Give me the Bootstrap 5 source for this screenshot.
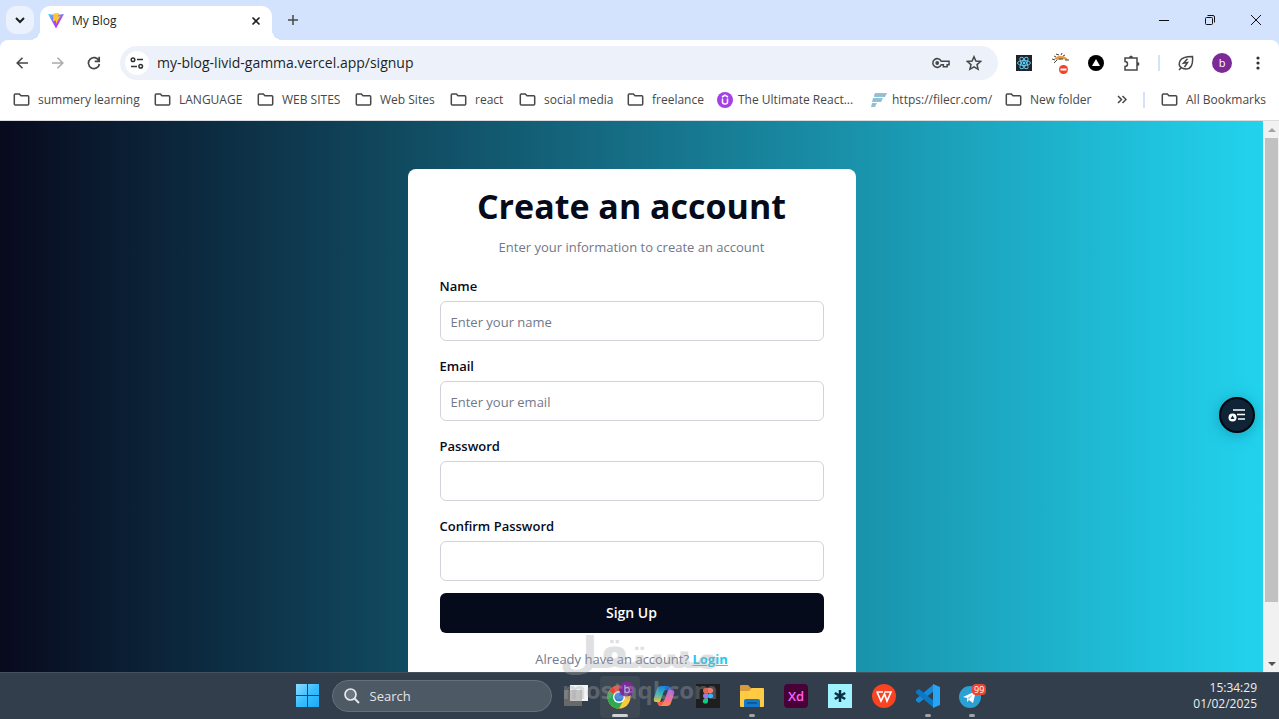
<!DOCTYPE html>
<html lang="en">
<head>
<meta charset="utf-8">
<meta name="viewport" content="width=device-width, initial-scale=1">
<title>My Blog</title>
<link href="https://cdn.jsdelivr.net/npm/bootstrap@5.3.0/dist/css/bootstrap.min.css" rel="stylesheet">
<style>
  body { font-family: "Open Sans", "Noto Sans", sans-serif; font-size: 14px; line-height: 20px; color: #060b1c; background: #d3e3fd; }
  button { font: inherit; color: inherit; }
  svg { display: block; flex: none; }
  .plain { border: 0; background: none; padding: 0; display: flex; align-items: center; justify-content: center; }
  .line { fill: none; stroke: currentColor; }
  /* Tab strip */
  .tabstrip { height: 40px; padding-left: 6px; }
  .tab-search { width: 28px; height: 28px; border-radius: 10px; background: #ebf1fd; margin: 6px 6px 6px 0; color: #1f1f1f; }
  .page-tab { width: 232px; height: 34px; margin-top: 6px; padding: 0 10px 5px 8px; gap: 8px; background: #fff; border-radius: 10px 10px 0 0; font-size: 12px; color: #1f1f1f; position: relative; }
  .page-tab::before, .page-tab::after { content: ""; position: absolute; bottom: 0; width: 10px; height: 10px; }
  .page-tab::before { left: -10px; background: radial-gradient(circle at 0 0, transparent 10px, #fff 10px); }
  .page-tab::after { right: -10px; background: radial-gradient(circle at 100% 0, transparent 10px, #fff 10px); }
  .win { width: 46px; height: 40px; color: #111; }
  /* Address bar */
  .toolbar { height: 46px; background: #fff; border-radius: 8px 8px 0 0; color: #474747; padding: 0 3px 0 4px; }
  .nav-btn { width: 36px; height: 34px; }
  .nav-btn.off { color: #a9abae; }
  .omnibox { height: 34px; border-radius: 17px; background: #edf2fa; margin-left: 8px; padding: 0 16px 0 5px; }
  .site-info { width: 24px; height: 24px; border-radius: 50%; background: #fff; color: #333; }
  .omnibox input { border: 0; background: none; outline: 0; padding: 0; min-width: 0; font-size: 14px; color: #1f1f1f; }
  .ext { width: 36px; height: 34px; }
  .divider { width: 2px; height: 16px; background: #d3e3fd; }
  .avatar { width: 20px; height: 20px; border-radius: 50%; background: #7b2a98; color: #fff; font-size: 11px; line-height: 19px; text-align: center; }
  /* Bookmarks */
  .bookmarks { height: 35px; background: #fff; border-bottom: 1px solid #dadce0; font-size: 12px; padding: 0 13px 7px; color: #474747; }
  .bookmark-list { display: grid; grid-template-columns: 141px 103px 98px 95px 69px 108px 89px 154px 135px auto; }
  .bookmarks a { display: flex; align-items: center; gap: 8px; color: #474747; text-decoration: none; white-space: nowrap; }
  /* Signup page */
  .page-view { min-height: 0; overflow: hidden; }
  .signup { background: linear-gradient(to right, #080a1e, #22d3ee); padding-top: 48px; }
  .signup-card { width: 448px; background: #fff; border-radius: 8px; padding: 15px 32px 32px; }
  .signup-card h1 { font-size: 34px; line-height: 45px; font-weight: 700; margin: 0 0 8px; white-space: nowrap; }
  .muted { color: #71788a; font-size: 13px; }
  .fields { margin: 22px 0 12px; display: grid; gap: 18px; }
  .field label { display: block; font-weight: 600; font-size: 13px; line-height: 14px; margin-bottom: 8px; }
  .field .form-control { height: 40px; border: 1px solid #d1d3da; border-radius: 6px; padding: 2px 10px 0; font-size: 13px; }
  .field .form-control::placeholder { color: #71788a; opacity: 1; }
  .signup-btn { height: 40px; background: #060b1c; color: #fff; border: 0; border-radius: 6px; font-size: 14px; font-weight: 600; padding: 0; }
  .login-link { color: #22c9ee; font-weight: 700; }
  .scroll-rail { width: 16px; background: #f1f1f1; border-left: 1px solid #f8f8f8; color: #505050; }
  .scroll-thumb { width: 13px; margin: 0 1px; flex: 465 0 0; background: #c1c1c1; }
  .scroll-rest { flex: 53 0 0; }
  .arrow { height: 17px; }
  .reader { position: absolute; right: 24px; top: 276px; width: 36px; height: 36px; border-radius: 50%; background: #0f2437; border: 2px solid #02060c; box-shadow: 0 2px 14px #0e7f9a99; color: #fff; }
  /* Taskbar */
  .taskbar { height: 47px; background: #323e4b; border-top: 1px solid #46515c; color: #eee; }
  .side { flex: 1 1 0; }
  .dock { flex: none; height: 46px; }
  .tile { width: 44px; height: 44px; position: relative; }
  .tile.open::after { content: ""; position: absolute; left: 19px; bottom: 1px; width: 6px; height: 3px; border-radius: 2px; background: #a0a4aa; }
  .tile.active::before { content: ""; position: absolute; inset: 2px 2px 0; border-radius: 4px; background: #3e4954; }
  .tile.active::after { left: 14px; width: 16px; background: #d0d3d6; }
  .tile svg { position: relative; }
  .search-pill { width: 220px; height: 32px; border-radius: 16px; background: #4d5965; border: 1px solid #65707a; padding: 0 11px; margin: 0 2px; gap: 10px; }
  .search-pill input { background: none; border: 0; outline: 0; min-width: 0; width: 100%; color: #e3e5e8; padding: 0; font-size: 13px; }
  .search-pill input::placeholder { color: #e3e5e8; opacity: 1; }
  .clock { font-size: 12px; line-height: 16px; padding-right: 22px; }
  .stamp { position: absolute; left: 50%; bottom: 0; width: 160px; height: 104px; margin-left: -80px; overflow: visible; color: #a6a8ad; opacity: .35; pointer-events: none; }
</style>
</head>
<body class="vh-100 d-flex flex-column overflow-hidden position-relative">
<svg width="0" height="0" class="position-absolute"><defs>
  <symbol id="folder" viewBox="0 0 16 13"><path d="M1.8.9h4l1.7 1.8h6.7q1 0 1 1v7.4q0 1-1 1H1.8q-1 0-1-1V1.9q0-1 1-1z" fill="none" stroke="#474747" stroke-width="1.5"/></symbol>
</defs></svg>

<header>
  <div class="tabstrip d-flex">
    <button class="plain tab-search" aria-label="Search tabs"><svg width="10" height="7" viewBox="0 0 10 7"><path class="line" stroke-width="2" d="M1 1l4 4 4-4"/></svg></button>
    <div class="page-tab d-flex align-items-center">
      <svg width="16" height="16" viewBox="0 0 16 16"><defs><linearGradient id="v" x2=".6" y2="1"><stop stop-color="#41d1ff"/><stop offset=".6" stop-color="#a64cf5"/><stop offset="1" stop-color="#bd34fe"/></linearGradient></defs><path d="M0 1l8 1 8-1-8 14.500z" fill="url(#v)"/><path d="M5.500.500L11 0l-1 3.500 2.500-.5L8 11V7.500l-3 .5z" fill="#ffc430"/></svg>
      <span class="flex-grow-1">My Blog</span>
      <button class="plain" aria-label="Close tab"><svg width="12" height="12" viewBox="0 0 12 12"><path class="line" stroke-width="1.6" d="M2.500 2.500l7 7m0-7l-7 7"/></svg></button>
    </div>
    <button class="plain ms-3" aria-label="New tab"><svg width="10" height="10" viewBox="0 0 10 10"><path d="M5 0v10M0 5h10" stroke="#474747" stroke-width="1.5"/></svg></button>
    <div class="d-flex ms-auto">
      <button class="plain win" aria-label="Minimize"><svg width="10" height="10"><path d="M0 5.500h10" stroke="#111"/></svg></button>
      <button class="plain win" aria-label="Restore"><svg width="10" height="10" viewBox="0 0 10 10"><rect x=".5" y="2.500" width="7" height="7" rx="1" fill="none" stroke="#111"/><path d="M2.500.5H8Q9.500.5 9.500 2v5.500" fill="none" stroke="#111"/></svg></button>
      <button class="plain win" aria-label="Close"><svg width="10" height="10" viewBox="0 0 10 10"><path d="M0 0l10 10M10 0L0 10" stroke="#111"/></svg></button>
    </div>
  </div>

  <div class="toolbar d-flex align-items-center">
    <button class="plain nav-btn" aria-label="Back"><svg width="12" height="12" viewBox="0 0 12 12"><path class="line" stroke-width="1.6" d="M6.500.7L1.200 6l5.300 5.300M1.200 6H12"/></svg></button>
    <button class="plain nav-btn off" aria-label="Forward"><svg width="12" height="12" viewBox="0 0 12 12"><path class="line" stroke-width="1.6" d="M5.500.7L10.800 6l-5.300 5.300M10.800 6H0"/></svg></button>
    <button class="plain nav-btn" aria-label="Reload"><svg width="14" height="14" viewBox="0 0 14 14"><path class="line" stroke-width="1.7" d="M12 4.800A5.500 5.500 0 1 0 12.400 8M12.200.8v4.500H7.700"/></svg></button>
    <div class="omnibox d-flex align-items-center flex-grow-1">
      <button class="plain site-info" aria-label="Site information"><svg width="14" height="12" viewBox="0 0 14 12"><g class="line" stroke-width="1.5"><path d="M7 2.500h6M1 9.500h6"/><circle cx="3" cy="2.700" r="1.800"/><circle cx="10.700" cy="9.200" r="1.800"/></g></svg></button>
      <input class="flex-grow-1 ms-2" aria-label="Address" value="my-blog-livid-gamma.vercel.app/signup">
      <button class="plain me-3" aria-label="Passwords"><svg width="18" height="12" viewBox="0 0 19 12"><path class="line" stroke-width="1.6" d="M9.700 4.200A4.600 4.600 0 1 0 9.700 7.800H12V10h4V7.800h2V4.200z"/><circle cx="5.500" cy="6" r="2" fill="#474747"/></svg></button>
      <button class="plain" aria-label="Bookmark this page"><svg width="16" height="16" viewBox="0 0 16 16"><path class="line" stroke-width="1.5" d="M8 1.700l1.900 4.400 4.700.4-3.600 3.100 1.100 4.700L8 11.800l-4.100 2.500L5 9.600 1.400 6.500l4.700-.4z"/></svg></button>
    </div>
    <div class="d-flex align-items-center ps-2">
      <button class="plain ext" aria-label="React Developer Tools"><svg width="16" height="16" viewBox="0 0 16 16"><path fill="#20232a" d="M0 0h16v16H0z"/><g fill="none" stroke="#61c9f0"><ellipse cx="8" cy="8" rx="6.500" ry="2.500"/><ellipse cx="8" cy="8" rx="6.500" ry="2.500" transform="rotate(60 8 8)"/><ellipse cx="8" cy="8" rx="6.500" ry="2.500" transform="rotate(120 8 8)"/></g><circle cx="8" cy="8" r="1.400" fill="#61c9f0"/></svg></button>
      <button class="plain ext" aria-label="Download extension"><svg width="18" height="22" viewBox="0 0 18 22"><path d="M3 7q4-4 7-3 5 0 7 4l-6-1-4 1z" fill="#e59a3b"/><path d="M5 2l3 1m3-2l-1 2m4 0l-2 1M1 7l3 1m-1 3l3-3m2-1h4m2 1h4M3 4l2 1" stroke="#444" fill="none"/><circle cx="12.500" cy="17.500" r="4.500" fill="#f0432a"/><path fill="#fff" d="M9.500 16.500h6v2h-6z"/></svg></button>
      <button class="plain ext" aria-label="Reader extension"><svg width="16" height="16"><circle cx="8" cy="8" r="8"/><path d="M8 4l4 7H4z" fill="#fff"/></svg></button>
      <button class="plain ext" aria-label="Extensions"><svg width="18" height="17" viewBox="0 0 18 17"><path class="line" stroke-width="1.5" d="M2 3h12v12H2v-3.500a2.500 2.500 0 0 0 0-5z"/><path d="M6 3q0-2.500 2-2.500T10 3zM14 7q2.500 0 2.500 2T14 11z" fill="#474747"/></svg></button>
      <span class="divider ms-2 me-2"></span>
      <button class="plain ext" aria-label="Energy saver"><svg width="16" height="16" viewBox="0 0 16 16"><path class="line" stroke-width="1.5" d="M14.500 1.500Q15.500 14 8 14-1 13 2 6 4 1.500 14.500 1.500zM1 15l2.500-2.500M9.500 3.800L5.500 8.200l4-.6-3 4.400"/></svg></button>
      <button class="plain ext" aria-label="Profile"><span class="avatar">b</span></button>
      <button class="plain ext" aria-label="Browser menu"><svg width="4" height="14" fill="#333"><circle cx="2" cy="2" r="1.600"/><circle cx="2" cy="7" r="1.600"/><circle cx="2" cy="12" r="1.600"/></svg></button>
    </div>
  </div>

  <nav class="bookmarks d-flex align-items-center" aria-label="Bookmarks">
    <div class="bookmark-list">
      <a href="#"><svg width="17" height="13"><use href="#folder"/></svg>summery learning</a>
      <a href="#"><svg width="17" height="13"><use href="#folder"/></svg>LANGUAGE</a>
      <a href="#"><svg width="17" height="13"><use href="#folder"/></svg>WEB SITES</a>
      <a href="#"><svg width="17" height="13"><use href="#folder"/></svg>Web Sites</a>
      <a href="#"><svg width="17" height="13"><use href="#folder"/></svg>react</a>
      <a href="#"><svg width="17" height="13"><use href="#folder"/></svg>social media</a>
      <a href="#"><svg width="17" height="13"><use href="#folder"/></svg>freelance</a>
      <a href="#" class="gap-1"><svg width="18" height="16" viewBox="0 0 18 16"><circle cx="9" cy="8" r="8" fill="#a53fe6"/><path d="M6.500 6.500V10q0 2 2.500 2t2.500-2V6.500M6 5l3-1.800L12 5" fill="none" stroke="#fff" stroke-width="1.500"/></svg>The Ultimate React...</a>
      <a href="#" class="gap-1"><svg width="18" height="16" viewBox="0 0 18 16"><path d="M5 1h12l-2 4H4zM3 6h10l-2 4H2zM2 11h5l-2 4H1z" fill="#8cc5dc"/><path d="M4 3h12M3 8h9M2 13h4" stroke="#a9b0b5" stroke-dasharray="3 1"/></svg>https://filecr.com/</a>
      <a href="#"><svg width="17" height="13"><use href="#folder"/></svg>New folder</a>
    </div>
    <div class="d-flex align-items-center ms-auto">
      <button class="plain" aria-label="More bookmarks"><svg width="10" height="9" viewBox="0 0 10 9"><path class="line" stroke-width="1.5" d="M1 1l3.500 3.500L1 8m4.500-7L9 4.500 5.500 8"/></svg></button>
      <span class="divider mx-3"></span>
      <a href="#"><svg width="17" height="13"><use href="#folder"/></svg>All Bookmarks</a>
    </div>
  </nav>
</header>

<div class="page-view d-flex flex-grow-1 position-relative">
  <main class="signup flex-grow-1">
    <form class="signup-card mx-auto">
      <h1 class="text-center">Create an account</h1>
      <p class="muted text-center mb-0">Enter your information to create an account</p>
      <div class="fields">
        <div class="field"><label for="name">Name</label><input id="name" class="form-control" placeholder="Enter your name"></div>
        <div class="field"><label for="email">Email</label><input id="email" type="email" class="form-control" placeholder="Enter your email"></div>
        <div class="field"><label for="pw">Password</label><input id="pw" type="password" class="form-control"></div>
        <div class="field"><label for="pw2">Confirm Password</label><input id="pw2" type="password" class="form-control"></div>
      </div>
      <button type="button" class="signup-btn w-100">Sign Up</button>
      <p class="muted text-center mt-3 mb-0">Already have an account? <a class="login-link" href="#">Login</a></p>
    </form>
  </main>
  <div class="scroll-rail d-flex flex-column">
    <span class="arrow plain"><svg width="8" height="4"><path d="M0 4l4-4 4 4z" fill="#a3a3a3"/></svg></span>
    <span class="scroll-thumb"></span><span class="scroll-rest"></span>
    <span class="arrow plain"><svg width="8" height="4"><path d="M0 0l4 4 4-4z" fill="#505050"/></svg></span>
  </div>
  <button class="plain reader" aria-label="Open reader"><svg width="18" height="14" viewBox="0 0 18 14"><path d="M5 2h12M9 6.500h8M10 11h7" stroke="#fff" stroke-width="1.500"/><circle cx="4.500" cy="9.500" r="4" fill="#fff"/><path d="M4.500 7.500l2 3.500h-4z" fill="#0f2437"/></svg></button>
</div>

<footer class="taskbar d-flex align-items-center">
  <div class="side"></div>
  <div class="dock d-flex align-items-center">
    <button class="plain tile" aria-label="Start"><svg width="24" height="24" viewBox="0 0 24 24"><defs><linearGradient id="w" x2="1" y2="1"><stop stop-color="#8fdcff"/><stop offset=".5" stop-color="#38bfff"/><stop offset="1" stop-color="#1ca9f5"/></linearGradient></defs><path d="M0 0h11v11H0zM12 0h11v11H12zM0 12h11v11H0zM12 12h11v11H12z" fill="url(#w)"/></svg></button>
    <div class="search-pill d-flex align-items-center"><svg width="16" height="16" viewBox="0 0 16 16"><circle cx="6.500" cy="6.500" r="5.500" fill="#6b7681" stroke="#e8e8e8" stroke-width="1.700"/><path d="M10.500 10.500l4.500 4.500" stroke="#e8e8e8" stroke-width="2"/></svg><input aria-label="Search" placeholder="Search"></div>
    <button class="plain tile" aria-label="Task view"><svg width="24" height="24" viewBox="0 0 24 24"><path d="M0 6h18v16H0z" fill="#69696a"/><path d="M6 1h18v16H6z" fill="#f5f5f5"/><path d="M6 6h12v11H6z" fill="#c2c2c2"/></svg></button>
    <button class="plain tile active open" aria-label="Chrome"><svg width="28" height="30" viewBox="0 0 28 30"><g transform="translate(13 16)"><circle r="11.500" fill="#fbc93c"/><path d="M0 0L-10-5.800A11.500 11.500 0 0 1 10-5.800z" fill="#ea4335"/><path d="M0 0l-10-5.800A11.500 11.500 0 0 0 0 11.500l5-9z" fill="#2da94f"/><circle r="6" fill="#fff"/><circle r="4.600" fill="#3482e0"/></g><circle cx="20.500" cy="8" r="7.500" fill="#7b2a98"/><text x="17.500" y="12" fill="#d8c5e0" font-size="11">b</text></svg></button>
    <button class="plain tile" aria-label="Copilot"><svg width="24" height="22" viewBox="0 0 24 22"><defs><linearGradient id="c1" x2="0" y2="1"><stop stop-color="#1a83d9"/><stop offset=".5" stop-color="#32b9b7"/><stop offset="1" stop-color="#efc82d"/></linearGradient><linearGradient id="c2" x2="0" y2="1"><stop stop-color="#a95af0"/><stop offset=".5" stop-color="#ee69a6"/><stop offset="1" stop-color="#ff8a42"/></linearGradient></defs><path d="M17 1H9Q6 1 5 4L2 13q-1 4 2 4h4l4-11q1-2 3-2h2z" fill="url(#c1)"/><path d="M7 21h8q3 0 4-3l3-9q1-4-2-4h-4l-4 11q-1 2-3 2H7z" fill="url(#c2)"/><path d="M14 1h2q2 0 3 4h-4q-2 0-3 3z" fill="#246fd2"/><path d="M5 17h4q2 0 3-4-1 8-4 8-2 0-3-4z" fill="#f15d45"/></svg></button>
    <button class="plain tile" aria-label="Figma"><svg width="24" height="24" viewBox="0 0 24 24"><path fill="#1e1e1e" d="M0 0h24v24H0z"/><path d="M12 4H9.500a2.600 2.600 0 0 0 0 5.200H12z" fill="#f24e1e"/><path d="M12 4h2.500a2.600 2.600 0 0 1 0 5.200H12z" fill="#ff7262"/><path d="M12 9.200H9.500a2.600 2.600 0 0 0 0 5.200H12z" fill="#a259ff"/><circle cx="14.500" cy="11.800" r="2.600" fill="#30b6ff"/><path d="M12 14.400H9.500A2.600 2.600 0 1 0 12 17z" fill="#0acf83"/></svg></button>
    <button class="plain tile open" aria-label="File Explorer"><svg width="24" height="22" viewBox="0 0 24 22"><path d="M0 1q0-1 1-1h7l3 3h12v6H0z" fill="#d99a3a"/><path d="M0 6h9l3-3h11q1 0 1 1v17q0 1-1 1H1q-1 0-1-1z" fill="#ffca44"/><path d="M4 22v-6q0-2 2-2h12q2 0 2 2v6z" fill="#1477c8"/><path d="M7 18h10" stroke="#083f73"/></svg></button>
    <button class="plain tile" aria-label="Adobe XD"><svg width="24" height="24"><rect width="24" height="24" rx="4" fill="#470137"/><text x="4" y="17" font-size="13" font-weight="600" fill="#ff61f6">Xd</text></svg></button>
    <button class="plain tile" aria-label="Notes"><svg width="24" height="24"><path fill="#9ff3ff" d="M0 0h24v24H0z"/><path d="M12 6v12M6.800 9l10.400 6M17.200 9L6.800 15" stroke="#092f45" stroke-width="2.500"/></svg></button>
    <button class="plain tile" aria-label="WPS Office"><svg width="24" height="24"><circle cx="12" cy="12" r="12" fill="#fa4322"/><path d="M4.500 8H11M5 8l4 9 3.500-7L15 17l4-9h-6.500" fill="none" stroke="#fff" stroke-width="1.700"/></svg></button>
    <button class="plain tile open" aria-label="Visual Studio Code"><svg width="24" height="24" viewBox="0 0 24 24"><path d="M18 0v7L3 19l-3-2v-2z" fill="#1689d8"/><path d="M18 24v-7L3 5 0 7v2z" fill="#0b78c6"/><path d="M17 0l7 3v18l-7 3z" fill="#27a5f2"/></svg></button>
    <button class="plain tile open" aria-label="Telegram"><svg width="30" height="26" viewBox="0 0 30 26"><circle cx="13" cy="14" r="11" fill="#2ba0d5"/><path d="M6 14l13-6-3 12-4-3-2 2v-4z" fill="#fff"/><path d="M10 15l6-4-4 6" fill="#b9d8e8"/><rect x="15" y="1" width="14" height="11" rx="4" fill="#f4412d"/><text x="17" y="10" font-size="9" fill="#fff">99</text></svg></button>
  </div>
  <div class="side"><div class="clock text-end">15:34:29<br>01/02/2025</div></div>
</footer>

<svg class="stamp" viewBox="0 0 160 104" aria-hidden="true" fill="currentColor" text-anchor="middle" font-weight="700"><text x="80" y="53" font-family="DejaVu Sans" font-size="44">مستقل</text><text x="80" y="84" font-size="24">mostaql.com</text></svg>
<script src="https://cdn.jsdelivr.net/npm/bootstrap@5.3.0/dist/js/bootstrap.bundle.min.js"></script>
</body>
</html>
